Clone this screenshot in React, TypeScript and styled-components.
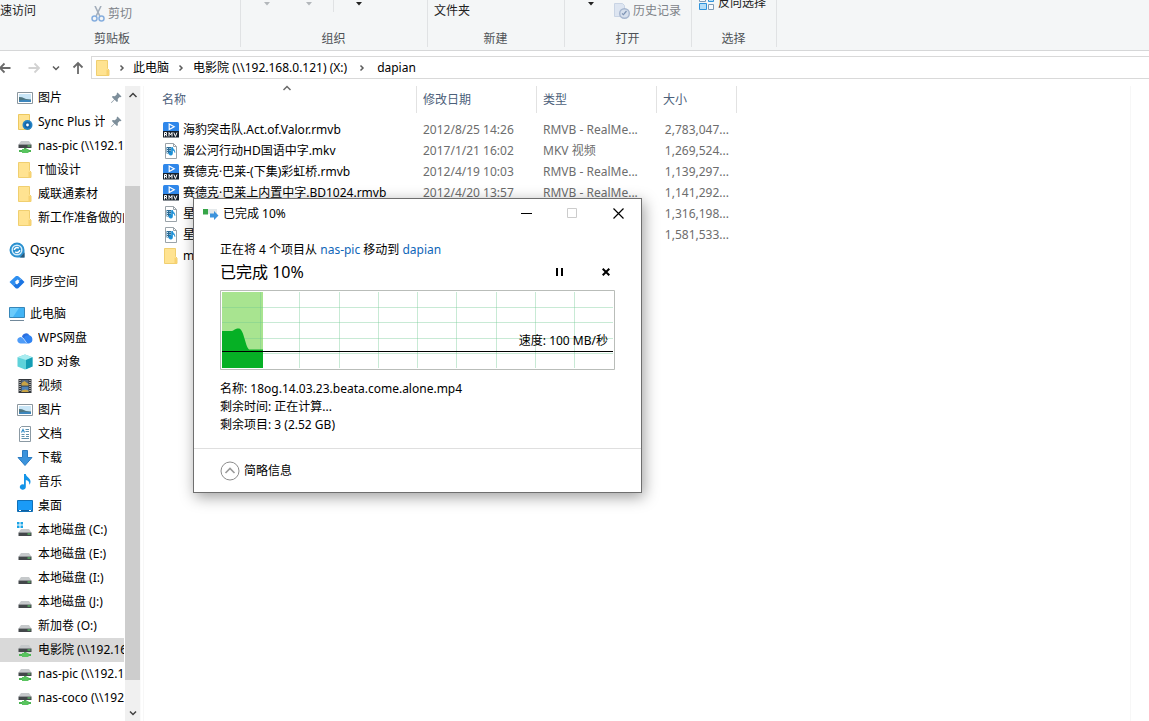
import React from "react";
import styled, { createGlobalStyle } from "styled-components";

const Global = createGlobalStyle`
  * { box-sizing: border-box; }
  body {
    margin: 0;
    background: #fff;
    color: #000;
    font: 12px/18px "Noto Sans", "Noto Sans CJK SC", sans-serif;
  }
  button { font: inherit; color: inherit; background: none; border: 0; padding: 0; }
  svg { display: block; flex: none; }
`;

/* ---------- icons ---------- */

const FolderIcon = () => (
  <svg width="16" height="18" viewBox="0 0 16 18">
    <path d="M1.5 1.5h11v8l1.500 1.500v5.500h-12.500z" fill="#ffe391" stroke="#f0cf70" />
    <path d="M11.500 10.500l2.500 1v5h-2.500z" fill="#f7d271" />
  </svg>
);

const SyncFolderIcon = () => (
  <svg width="16" height="18" viewBox="0 0 16 18">
    <path d="M1.5 1.5h11v15h-11z" fill="#ffe391" stroke="#ecc860" />
    <circle cx="10.5" cy="12" r="5" fill="#2483c5" />
    <circle cx="10.5" cy="12" r="3.2" fill="#1565a8" />
    <circle cx="10.5" cy="12" r="1.4" fill="#fff" />
  </svg>
);

const PictureIcon = () => (
  <svg width="16" height="16" viewBox="0 0 16 16">
    <path d="M.5 2.500h15v11H.5z" fill="#fff" stroke="#8b979f" />
    <path d="M2 4h12v8H2z" fill="#c9e6f7" />
    <path d="M2 7l3 .2 4 1.800 5 .5V12H2z" fill="#50757f" />
    <path d="M2 10.500l5-.8 7 .5V12H2z" fill="#3d86bd" />
  </svg>
);

const DriveIcon = ({ net, win }: { net?: boolean; win?: boolean }) => (
  <svg width="16" height="16" viewBox="0 0 16 16">
    {win && <path d="M0 0h2.500v2.500H0zM3.500 0H6v2.500H3.500zM0 3.500h2.500V6H0zM3.500 3.500H6V6H3.500z" fill="#1ba4e6" />}
    <g transform={net ? "translate(0 -3)" : "translate(0 1)"}>
      <path d="M4 6h8l2.500 3.500h-13z" fill="#c6c9cb" />
      <path d="M1.500 9.500h13V13h-13z" fill="#43474a" />
      <path d="M10.500 10.500h3v1h-3z" fill="#63e36e" />
    </g>
    {net && (
      <>
        <path d="M7 10h2.500v2H7zM2 12h12v2H2z" fill="#4cb553" />
        <path d="M5 11h6.500v4H5z" fill="#59c45f" />
      </>
    )}
  </svg>
);

const QsyncIcon = () => (
  <svg width="16" height="16" viewBox="0 0 16 16">
    <path d="M8 .5a7.500 7.500 0 0 1 7.500 7.500v7.500H8A7.500 7.500 0 0 1 8 .5z" fill="#2a90cf" />
    <path d="M11 15.500l4.500-5v5z" fill="#2c5878" />
    <circle cx="8" cy="8" r="4.800" fill="none" stroke="#d5eefc" strokeWidth="1.500" />
    <path d="M5.300 8a2.700 2.700 0 0 1 4.500-1.800M10.700 8a2.700 2.700 0 0 1-4.500 1.800" fill="none" stroke="#fff" strokeWidth="1.500" />
  </svg>
);

const SpaceIcon = () => (
  <svg width="16" height="16" viewBox="0 0 16 16">
    <path d="M7 2L.5 8l3.500 3.500L7 9 5.800 8 8.500 5.500l1.500 1L12.500 5 9 2z" fill="#2f8ff0" />
    <path d="M9 14.500L15.500 8 12.500 5 9.500 7l1 1L8 10.500 6.500 9.500 4 11.500l3 3z" fill="#1a74e2" />
  </svg>
);

const PcIcon = () => (
  <svg width="16" height="16" viewBox="0 0 16 16">
    <path d="M.5 1.500h15v10H.5z" fill="#42b4f5" stroke="#3786b8" />
    <path d="M1 2h9L4 11H1z" fill="#6bcbfb" />
    <path d="M1 14h14v1H1z" fill="#71889a" />
  </svg>
);

const CloudIcon = () => (
  <svg width="16" height="16" viewBox="0 0 16 16">
    <path d="M5 7a4 4 0 0 1 7.500-1.500L12 9H6z" fill="#2a6fe0" />
    <path d="M3.500 13.500a3.300 3.300 0 1 1 3-5l3.500 5z" fill="#4f9cf8" />
    <path d="M7 9.500a4.200 4.200 0 1 1 5 4H9.500z" fill="#2f83f2" />
    <path d="M4.500 7.200l1.600.8 3.900 5.500" fill="none" stroke="#cfe4ff" strokeWidth=".8" />
  </svg>
);

const CubeIcon = () => (
  <svg width="16" height="16" viewBox="0 0 16 16">
    <path d="M8 .5l7.500 2.800v9.200L8 15.500.5 12.500V3.300z" fill="#5fd2da" />
    <path d="M.5 3.300L8 .5l7.500 2.800L9 6z" fill="#a9ecf0" />
    <path d="M9 6l6.500-2.700v9.200L9 15.200z" fill="#159db4" />
  </svg>
);

const FilmIcon = () => (
  <svg width="16" height="16" viewBox="0 0 16 16">
    <path d="M1.500 1h13v14h-13z" fill="#34383c" />
    <path d="M4.500 2h7v5.500h-7z" fill="#56687f" />
    <path d="M4.500 8.500h7V14h-7z" fill="#4b82bb" />
    <path d="M4.500 5l3-2 4 3v1.500h-7zM4.500 12.500l4-1 3 1V14h-7z" fill="#c9a445" />
    <path d="M3 2v12M13 2v12" stroke="#fff" strokeWidth="1" strokeDasharray="1 1" />
  </svg>
);

const DocIcon = () => (
  <svg width="16" height="16" viewBox="0 0 16 16">
    <path d="M4.500.5h9v15h-11v-13z" fill="#fff" stroke="#8b99a3" />
    <path d="M8.500 3.500h3.500M8.500 5.500h3.500M4.500 8.500h3M9 8.500h3M4.500 10.500h3M9 10.500h3M4.500 12.500h7.500" stroke="#5f91ad" />
    <path d="M4.500 6.500l1.500-3 1.500 3" fill="none" stroke="#2f8cc9" strokeWidth="1.200" />
  </svg>
);

const DownloadIcon = () => (
  <svg width="16" height="16" viewBox="0 0 16 16">
    <path d="M5.500.5h5v7H15L8 15.500 1 7.500h4.500z" fill="#3b93dc" stroke="#2c7cc2" />
  </svg>
);

const MusicIcon = () => (
  <svg width="16" height="16" viewBox="0 0 16 16">
    <path d="M7 0h1.800c.3 3 4.700 4 4.700 7.500 0 1.500-.5 2.500-1.200 3.300.3-3-1-4-3.500-4.800V13a3 2.800 0 1 1-1.800-2.600z" fill="#1394e8" />
  </svg>
);

const DesktopIcon = () => (
  <svg width="16" height="16" viewBox="0 0 16 16">
    <path d="M.5 2.500h15v11H.5z" fill="#1a9bf7" stroke="#1070b8" />
    <path d="M1 12h14v1H1z" fill="#0f5f9f" />
    <path d="M2 12h2v1H2zM12 12h2v1h-2z" fill="#fff" />
  </svg>
);

const PinIcon = () => (
  <svg width="12" height="12" viewBox="0 0 12 12">
    <path d="M7.500.5l4 4-1 .8-.8-.2-2 2 .2 2.200-1 .8-2.300-2.300L1.500 11 1 10.500l3.200-3.100L1.900 5.100l.8-1 2.200.2 2-2-.2-.8z" fill="#7e8f9b" />
  </svg>
);

const RmvbIcon = () => (
  <svg width="16" height="16" viewBox="0 0 16 16">
    <rect x="0" y="0" width="16" height="11" rx="1.500" fill="#2f87ea" />
    <path d="M6.200 2l5 2.800-5 2.800z" fill="none" stroke="#fff" strokeWidth="1.200" />
    <path d="M0 9h16v6.500H0z" fill="#15202c" />
    <path d="M1.500 14.500v-4h2v2h-2M2.700 12.500l1.300 2M6 14.500v-4l1.500 2.300L9 10.500v4M10.800 10.500l1.600 4 1.600-4" fill="none" stroke="#fff" strokeWidth="1" />
  </svg>
);

const MediaIcon = () => (
  <svg width="16" height="16" viewBox="0 0 16 16">
    <path d="M2.500.5h8l3 3v12h-11z" fill="#fff" stroke="#9aa3a9" />
    <path d="M10.500.5v3h3" fill="none" stroke="#9aa3a9" />
    <path d="M3.500 4H8v6.500H3.500z" fill="#2d6c96" />
    <path d="M4.500 5v5M7 5v5" stroke="#d3ebf8" strokeDasharray="1 1" />
    <path d="M9.500 4.500v6a1.800 1.600 0 1 1-1-1.400V4.500h1c.3 1.500 2.500 2 2.300 5-.3-1.500-1-2-2.300-2.500z" fill="#1b8fd6" stroke="#1b8fd6" strokeWidth=".7" />
  </svg>
);

const Chevron = ({ dir, color = "#5c5c5c" }: { dir: "up" | "down" | "right"; color?: string }) => (
  <svg width="10" height="10" viewBox="0 0 10 10" fill="none" stroke={color} strokeWidth="1.500">
    <path d={{ up: "M1.500 7L5 3.500 8.500 7", down: "M2 3.500L5 6.500 8 3.500", right: "M3.500 2.500L6 5 3.500 7.500" }[dir]} />
  </svg>
);

const Arrow = ({ d, color = "#6a6a6a" }: { d: string; color?: string }) => (
  <svg width="14" height="14" viewBox="0 0 14 14" fill="none" stroke={color} strokeWidth="1.800">
    <path d={d} />
  </svg>
);

const Caret = ({ color = "#222" }: { color?: string }) => (
  <svg width="6" height="4" viewBox="0 0 6 4"><path d="M0 0h6L3 3.500z" fill={color} /></svg>
);

const ScissorsIcon = () => (
  <svg width="14" height="16" viewBox="0 0 14 16" fill="none">
    <path d="M4 0l4.800 10M10 0L5.200 10" stroke="#a3aebb" strokeWidth="1.600" />
    <ellipse cx="3.500" cy="12.500" rx="2.500" ry="2.500" stroke="#86aede" strokeWidth="1.500" />
    <ellipse cx="10.500" cy="12.500" rx="2.500" ry="2.500" stroke="#86aede" strokeWidth="1.500" />
  </svg>
);

const HistoryIcon = () => (
  <svg width="16" height="16" viewBox="0 0 16 16">
    <path d="M.5.5h8l2 2v11H.5z" fill="#dde5f1" stroke="#c9d4e4" />
    <circle cx="10.500" cy="10.500" r="4.800" fill="#d6dfec" stroke="#a6b6cf" strokeWidth="1.400" />
    <path d="M10 11l2.500-3M8 10.500l2 1.500" stroke="#7d93b4" strokeWidth="1.200" />
  </svg>
);

const InvertIcon = () => (
  <svg width="16" height="16" viewBox="0 0 16 16">
    <path d="M.5 1.500h6v5h-6zM9.500 9.500h5v5h-5z" fill="#f8fbfe" stroke="#7f9bb6" />
    <path d="M9.500 1.500h5v5h-5zM.5 8.500h7v6h-7z" fill="#b5def9" stroke="#2f93dc" />
  </svg>
);

const MoveIcon = () => (
  <svg width="16" height="12" viewBox="0 0 16 12">
    <path d="M5 1h9v5H5z" fill="#e3e8ea" />
    <path d="M0 1h5v5.500H0z" fill="#37a548" />
    <path d="M7 5.500h4V3l4.500 4.500L11 12V9.500H7z" fill="#3c93dc" />
  </svg>
);

/* ---------- ribbon ---------- */

const Shell = styled.div`
  display: flex;
  flex-direction: column;
  height: 100vh;
  overflow: hidden;
`;

const Ribbon = styled.header`
  display: flex;
  flex: none;
  height: 51px;
  padding-bottom: 3px;
  background: #f4f6f7;
  border-bottom: 1px solid #d6d7d8;
`;

const Group = styled.section<{ $width: number }>`
  display: flex;
  flex-direction: column;
  width: ${(p) => p.$width}px;
  border-right: 1px solid #e0e2e4;
`;

const GroupBody = styled.div<{ $indent?: number; $gap?: number }>`
  display: flex;
  align-items: flex-end;
  gap: ${(p) => p.$gap ?? 0}px;
  height: 30px;
  padding-left: ${(p) => p.$indent ?? 0}px;
  overflow: hidden;
`;

const GroupLabel = styled.div<{ $shift?: boolean }>`
  padding-right: ${(p) => (p.$shift ? 16 : 1)}px;
  text-align: center;
  line-height: 17px;
  color: #4e5256;
`;

const Tool = styled.button<{ $lift: number; $muted?: boolean }>`
  display: flex;
  align-items: center;
  gap: 3px;
  margin-bottom: ${(p) => p.$lift}px;
  color: ${(p) => (p.$muted ? "#7d8288" : "#222")};
  white-space: nowrap;
`;

const ToolDivider = styled.span`
  width: 1px;
  height: 12px;
  margin-bottom: 18px;
  background: #e0e2e4;
`;

/* ---------- address bar ---------- */

const NavBar = styled.nav`
  display: flex;
  flex: none;
  align-items: center;
  height: 34px;
  padding-bottom: 1px;
`;

const NavButtons = styled.div`
  display: flex;
  align-items: center;
  gap: 10px;
  margin: 0 6px 0 -2px;
`;

const NavButton = styled.button<{ $spaced?: boolean }>`
  margin-left: ${(p) => (p.$spaced ? 5 : 0)}px;
`;

const Address = styled.div`
  display: flex;
  align-items: center;
  flex: 1;
  height: 23px;
  padding-left: 3px;
  border: 1px solid #d9d9d9;
  border-right: 0;
`;

const CrumbSep = styled.span<{ $width: number }>`
  display: flex;
  justify-content: center;
  width: ${(p) => p.$width}px;
`;

/* ---------- body ---------- */

const Body = styled.div`
  display: flex;
  flex: 1;
  min-height: 0;
  padding-top: 1px;
`;

const Sidebar = styled.aside`
  display: flex;
  flex-direction: column;
  gap: 8px;
  width: 125px;
  overflow: hidden;
`;

const Tree = styled.div`
  width: 124px;
`;

const TreeItem = styled.button<{ $root?: boolean; $selected?: boolean }>`
  display: flex;
  align-items: center;
  gap: 5px;
  width: 100%;
  height: 24px;
  padding-left: ${(p) => (p.$root ? 9 : 17)}px;
  background: ${(p) => (p.$selected ? "#d9d9d9" : "transparent")};
  text-align: left;
`;

const IconBox = styled.span`
  display: flex;
  justify-content: center;
  align-items: center;
  flex: none;
  width: 16px;
  height: 18px;
`;

const TreeLabel = styled.span`
  flex: 1;
  overflow: hidden;
  white-space: nowrap;
`;

const PinSlot = styled.span`
  padding-right: 2px;
`;

const Scrollbar = styled.div`
  display: flex;
  flex-direction: column;
  width: 16px;
  background: #f0f0f0;
  border-right: 1px solid #fafafa;
`;

const ScrollButton = styled.button`
  display: flex;
  align-items: center;
  justify-content: center;
  height: 17px;
`;

const Track = styled.div`
  display: grid;
  grid-template-rows: 83fr 494fr 24fr;
  flex: 1;
  &::after { content: ""; grid-row: 2; background: #cdcdcd; }
`;

const Main = styled.main`
  flex: 1;
  margin: 0 18px 0 2px;
  padding-left: 13px;
  border-left: 1px solid #f7f7f7;
  border-right: 1px solid #f7f7f7;
`;

const Files = styled.table`
  table-layout: fixed;
  width: 580px;
  border-collapse: separate;
  border-spacing: 0;
  tbody::before { content: ""; display: block; height: 6px; }
`;

const Col = styled.col<{ $width: number }>`
  width: ${(p) => p.$width}px;
`;

const Th = styled.th<{ $first?: boolean }>`
  position: relative;
  height: 27px;
  padding: 0 0 0 ${(p) => (p.$first ? 5 : 6)}px;
  border-right: 1px solid #e2e2e2;
  color: #4c607a;
  font-weight: 400;
  text-align: left;
`;

const SortMark = styled.span`
  position: absolute;
  top: -3px;
  left: 50%;
  transform: translateX(-50%);
`;

const Td = styled.td<{ $name?: boolean; $right?: boolean }>`
  height: 21px;
  padding: 0 8px 0 6px;
  color: ${(p) => (p.$name ? "#000" : "#6d6d6d")};
  text-align: ${(p) => (p.$right ? "right" : "left")};
  white-space: nowrap;
`;

const FileName = styled.span`
  display: flex;
  align-items: center;
  gap: 4px;
`;

/* ---------- copy dialog ---------- */

const Dialog = styled.section`
  position: absolute;
  top: 198px;
  left: 193px;
  width: 449px;
  background: #fff;
  border: 1px solid #6f6f6f;
  box-shadow: 2px 4px 14px rgba(0, 0, 0, 0.38);
`;

const TitleBar = styled.div`
  display: flex;
  align-items: center;
  height: 29px;
  padding-left: 9px;
`;

const Title = styled.span`
  flex: 1;
  padding-left: 4px;
`;

const CaptionButton = styled.button`
  display: flex;
  align-items: center;
  justify-content: center;
  width: 46px;
  height: 29px;
`;

const DialogBody = styled.div`
  padding: 13px 26px 14px;
`;

const Link = styled.a`
  color: #0f66b8;
  text-decoration: none;
`;

const ProgressRow = styled.div`
  display: flex;
  align-items: center;
  gap: 34px;
  height: 26px;
  padding-right: 3px;
  margin-bottom: 5px;
`;

const ProgressTitle = styled.h1`
  flex: 1;
  margin: 0;
  font-size: 16px;
  line-height: 26px;
  font-weight: 400;
`;

const ActionButton = styled.button`
  display: flex;
  align-items: center;
  justify-content: center;
  width: 12px;
  height: 24px;
`;

const ChartBox = styled.div`
  position: relative;
  height: 80px;
  margin-bottom: 10px;
  svg { width: 100%; }
`;

const Speed = styled.span`
  position: absolute;
  top: 42px;
  right: 7px;
`;

const DialogFooter = styled.div`
  height: 44px;
  padding: 0 26px;
  border-top: 1px solid #dfdfdf;
`;

const Toggle = styled.button`
  display: flex;
  align-items: center;
  gap: 4px;
  height: 43px;
`;

type Item = { label: string; icon: React.ReactNode; pin?: boolean; root?: boolean; selected?: boolean };

const trees: Item[][] = [
  [
    { label: "图片", icon: <PictureIcon />, pin: true },
    { label: "Sync Plus 计划", icon: <SyncFolderIcon />, pin: true },
    { label: "nas-pic (\\\\192.168.0.121)", icon: <DriveIcon net /> },
    { label: "T恤设计", icon: <FolderIcon /> },
    { label: "威联通素材", icon: <FolderIcon /> },
    { label: "新工作准备做的内容", icon: <FolderIcon /> },
  ],
  [{ label: "Qsync", icon: <QsyncIcon />, root: true }],
  [{ label: "同步空间", icon: <SpaceIcon />, root: true }],
  [
    { label: "此电脑", icon: <PcIcon />, root: true },
    { label: "WPS网盘", icon: <CloudIcon /> },
    { label: "3D 对象", icon: <CubeIcon /> },
    { label: "视频", icon: <FilmIcon /> },
    { label: "图片", icon: <PictureIcon /> },
    { label: "文档", icon: <DocIcon /> },
    { label: "下载", icon: <DownloadIcon /> },
    { label: "音乐", icon: <MusicIcon /> },
    { label: "桌面", icon: <DesktopIcon /> },
    { label: "本地磁盘 (C:)", icon: <DriveIcon win /> },
    { label: "本地磁盘 (E:)", icon: <DriveIcon /> },
    { label: "本地磁盘 (I:)", icon: <DriveIcon /> },
    { label: "本地磁盘 (J:)", icon: <DriveIcon /> },
    { label: "新加卷 (O:)", icon: <DriveIcon /> },
    { label: "电影院 (\\\\192.168.0.121)", icon: <DriveIcon net />, selected: true },
    { label: "nas-pic (\\\\192.168.0.121)", icon: <DriveIcon net /> },
    { label: "nas-coco (\\\\192.168.0.121)", icon: <DriveIcon net /> },
  ],
];

const files = [
  { icon: <RmvbIcon />, name: "海豹突击队.Act.of.Valor.rmvb", date: "2012/8/25 14:26", type: "RMVB - RealMe...", size: "2,783,047..." },
  { icon: <MediaIcon />, name: "湄公河行动HD国语中字.mkv", date: "2017/1/21 16:02", type: "MKV 视频", size: "1,269,524..." },
  { icon: <RmvbIcon />, name: "赛德克·巴莱-(下集)彩虹桥.rmvb", date: "2012/4/19 10:03", type: "RMVB - RealMe...", size: "1,139,297..." },
  { icon: <RmvbIcon />, name: "赛德克·巴莱上内置中字.BD1024.rmvb", date: "2012/4/20 13:57", type: "RMVB - RealMe...", size: "1,141,292..." },
  { icon: <MediaIcon />, name: "星", date: "", type: "", size: "1,316,198..." },
  { icon: <MediaIcon />, name: "星", date: "", type: "", size: "1,581,533..." },
  { icon: <FolderIcon />, name: "m", date: "", type: "", size: "" },
];

const SpeedChart = () => (
  <svg height="80" viewBox="0 0 395 80" preserveAspectRatio="none">
    <path d="M.5.5h394v79H.5z" fill="#fff" stroke="#b9bdb9" />
    <path d="M2 2h41v76H2z" fill="#a8e490" />
    <path
      d="M40.500 2v76M79.500 2v76M119.500 2v76M158.500 2v76M197.500 2v76M236.500 2v76M276.500 2v76M315.500 2v76M354.500 2v76M2 17.500h391M2 32.500h391M2 48.500h391M2 63.500h391"
      stroke="#6fc890"
      strokeOpacity=".38"
    />
    <path d="M2 41h9c3 0 4-3 8-2.500 5 1 6 17 10 21h14V78H2z" fill="#06b025" />
    <path d="M2 61.500h391" stroke="#000" />
  </svg>
);

export default function App() {
  return (
    <Shell>
      <Global />
      <Ribbon>
        <Group $width={241}>
          <GroupBody $gap={55}>
            <Tool $lift={10}>速访问</Tool>
            <Tool $lift={7} $muted><ScissorsIcon />剪切</Tool>
          </GroupBody>
          <GroupLabel $shift>剪贴板</GroupLabel>
        </Group>
        <Group $width={187}>
          <GroupBody $indent={23}>
            <Tool $lift={24} $muted aria-label="移动到"><Caret color="#b3b7bb" /></Tool>
            <CrumbSep $width={36} />
            <Tool $lift={24} $muted aria-label="复制到"><Caret color="#b3b7bb" /></Tool>
            <CrumbSep $width={21} />
            <ToolDivider />
            <CrumbSep $width={22} />
            <Tool $lift={24} aria-label="删除"><Caret /></Tool>
          </GroupBody>
          <GroupLabel>组织</GroupLabel>
        </Group>
        <Group $width={137}>
          <GroupBody $indent={6}><Tool $lift={10}>文件夹</Tool></GroupBody>
          <GroupLabel>新建</GroupLabel>
        </Group>
        <Group $width={127}>
          <GroupBody $indent={23} $gap={20}>
            <Tool $lift={24} aria-label="属性"><Caret /></Tool>
            <Tool $lift={10} $muted><HistoryIcon />历史记录</Tool>
          </GroupBody>
          <GroupLabel>打开</GroupLabel>
        </Group>
        <Group $width={85}>
          <GroupBody $indent={7}><Tool $lift={18}><InvertIcon />反向选择</Tool></GroupBody>
          <GroupLabel>选择</GroupLabel>
        </Group>
      </Ribbon>

      <NavBar>
        <NavButtons>
          <NavButton aria-label="后退"><Arrow d="M12.500 7H2M6.500 2.500L2 7l4.500 4.500" /></NavButton>
          <NavButton $spaced aria-label="前进"><Arrow color="#d2d2d2" d="M1.500 7H12M7.500 2.500L12 7l-4.500 4.500" /></NavButton>
          <NavButton aria-label="最近位置"><Chevron dir="down" /></NavButton>
          <NavButton aria-label="上移"><Arrow d="M7 13V2M2.500 6.500L7 2l4.500 4.500" /></NavButton>
        </NavButtons>
        <Address>
          <FolderIcon />
          <CrumbSep $width={22}><Chevron dir="right" /></CrumbSep>
          <span>此电脑</span>
          <CrumbSep $width={24}><Chevron dir="right" /></CrumbSep>
          <span>电影院 (\\192.168.0.121) (X:)</span>
          <CrumbSep $width={30}><Chevron dir="right" /></CrumbSep>
          <span>dapian</span>
        </Address>
      </NavBar>

      <Body>
        <Sidebar>
          {trees.map((items, i) => (
            <Tree key={i}>
              {items.map((it) => (
                <TreeItem key={it.label} $root={it.root} $selected={it.selected}>
                  <IconBox>{it.icon}</IconBox>
                  <TreeLabel>{it.label}</TreeLabel>
                  {it.pin && <PinSlot><PinIcon /></PinSlot>}
                </TreeItem>
              ))}
            </Tree>
          ))}
        </Sidebar>
        <Scrollbar>
          <ScrollButton aria-label="向上滚动"><Chevron dir="up" color="#404040" /></ScrollButton>
          <Track />
          <ScrollButton aria-label="向下滚动"><Chevron dir="down" color="#404040" /></ScrollButton>
        </Scrollbar>
        <Main>
          <Files>
            <colgroup>
              <Col $width={260} />
              <Col $width={120} />
              <Col $width={120} />
              <Col $width={80} />
            </colgroup>
            <thead>
              <tr>
                <Th $first>名称<SortMark><Chevron dir="up" color="#6b6b6b" /></SortMark></Th>
                <Th>修改日期</Th>
                <Th>类型</Th>
                <Th>大小</Th>
              </tr>
            </thead>
            <tbody>
              {files.map((f, i) => (
                <tr key={i}>
                  <Td $name><FileName>{f.icon}{f.name}</FileName></Td>
                  <Td>{f.date}</Td>
                  <Td>{f.type}</Td>
                  <Td $right>{f.size}</Td>
                </tr>
              ))}
            </tbody>
          </Files>
        </Main>
      </Body>

      <Dialog role="dialog" aria-label="已完成 10%">
        <TitleBar>
          <MoveIcon />
          <Title>已完成 10%</Title>
          <CaptionButton aria-label="最小化">
            <svg width="11" height="11" viewBox="0 0 11 11"><path d="M0 5.500h11" stroke="#000" /></svg>
          </CaptionButton>
          <CaptionButton aria-label="最大化" disabled>
            <svg width="11" height="11" viewBox="0 0 11 11"><path d="M.5.5h9v9h-9z" fill="none" stroke="#ccc" /></svg>
          </CaptionButton>
          <CaptionButton aria-label="关闭">
            <svg width="11" height="11" viewBox="0 0 11 11"><path d="M.5.5l10 10M10.500.5l-10 10" stroke="#000" strokeWidth="1.200" /></svg>
          </CaptionButton>
        </TitleBar>
        <DialogBody>
          <div>正在将 4 个项目从 <Link href="#nas-pic">nas-pic</Link> 移动到 <Link href="#dapian">dapian</Link></div>
          <ProgressRow>
            <ProgressTitle>已完成 10%</ProgressTitle>
            <ActionButton aria-label="暂停">
              <svg width="8" height="8" viewBox="0 0 8 8"><path d="M0 0h2v8H0zM5 0h2v8H5z" /></svg>
            </ActionButton>
            <ActionButton aria-label="取消">
              <svg width="8" height="8" viewBox="0 0 8 8"><path d="M.7.7l6.600 6.600M7.300.7L.7 7.300" stroke="#000" strokeWidth="2" /></svg>
            </ActionButton>
          </ProgressRow>
          <ChartBox>
            <SpeedChart />
            <Speed>速度: 100 MB/秒</Speed>
          </ChartBox>
          <div>名称: 18og.14.03.23.beata.come.alone.mp4</div>
          <div>剩余时间: 正在计算...</div>
          <div>剩余项目: 3 (2.52 GB)</div>
        </DialogBody>
        <DialogFooter>
          <Toggle>
            <svg width="20" height="20" viewBox="0 0 20 20" fill="none">
              <circle cx="10" cy="10" r="9" stroke="#8c8c8c" />
              <path d="M5.500 12L10 7.500l4.500 4.500" stroke="#9a9a9a" strokeWidth="1.600" />
            </svg>
            简略信息
          </Toggle>
        </DialogFooter>
      </Dialog>
    </Shell>
  );
}
